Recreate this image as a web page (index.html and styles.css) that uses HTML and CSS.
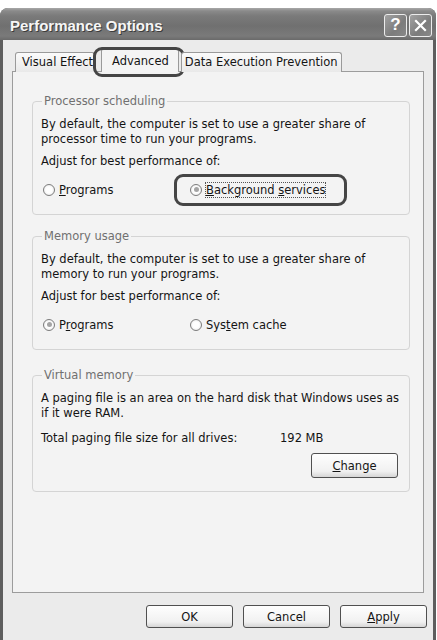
FILE: index.html
```html
<!DOCTYPE html>
<html>
<head>
<meta charset="utf-8">
<link rel="stylesheet" href="styles.css">
</head>
<body>
<div class="window">
  <div class="titlebar">
    <span class="title">Performance Options</span>
    <div class="tbuttons">
      <span class="tbtn">?</span>
      <span class="tbtn close"><svg width="15" height="15" viewBox="0 0 15 15"><path d="M3 3 L12 12 M12 3 L3 12" stroke="#fff" stroke-width="2.2" stroke-linecap="square"/></svg></span>
    </div>
  </div>
  <div class="body">
    <div class="tabs">
      <div class="tab first">Visual Effect</div>
      <div class="tab active">Advanced<span class="hl hl-tab"></span></div>
      <div class="tab last">Data Execution Prevention</div>
    </div>
    <div class="panel">
      <fieldset class="group g1">
        <legend>Processor scheduling</legend>
        <p class="txt">By default, the computer is set to use a greater share of<br>processor time to run your programs.</p>
        <p class="txt adj">Adjust for best performance of:</p>
        <div class="radios">
          <label class="radio r1"><span class="dot"></span><span><u>P</u>rograms</span></label>
          <label class="radio"><span class="dot on"></span><span class="focus"><u>B</u>ackground <u>s</u>ervices</span><span class="hl hl-bg"></span></label>
        </div>
      </fieldset>
      <fieldset class="group g2">
        <legend>Memory usage</legend>
        <p class="txt">By default, the computer is set to use a greater share of<br>memory to run your programs.</p>
        <p class="txt adj">Adjust for best performance of:</p>
        <div class="radios">
          <label class="radio r1"><span class="dot on"></span><span>P<u>r</u>ograms</span></label>
          <label class="radio"><span class="dot"></span><span>Sys<u>t</u>em cache</span></label>
        </div>
      </fieldset>
      <fieldset class="group g3">
        <legend>Virtual memory</legend>
        <p class="txt">A paging file is an area on the hard disk that Windows uses as<br>if it were RAM.</p>
        <div class="total"><span class="tl">Total paging file size for all drives:</span><span>192 MB</span></div>
        <div class="changerow"><button class="btn change"><u>C</u>hange</button></div>
      </fieldset>
    </div>
    <div class="footer">
      <button class="btn">OK</button>
      <button class="btn">Cancel</button>
      <button class="btn"><u>A</u>pply</button>
    </div>
  </div>
</div>
</body>
</html>
```

FILE: styles.css
```css
html, body { margin: 0; padding: 0; background: #fff; }
body { font-family: "DejaVu Sans", "Liberation Sans", sans-serif; font-size: 11.5px; color: #141414; }

.window {
  margin-top: 8px;
  width: 436px;
  height: 632px;
  background: #5e5e5e;
  border-radius: 8px 8px 0 0;
  display: flex;
  flex-direction: column;
  box-sizing: border-box;
  padding: 0 3px;
}
.titlebar {
  height: 32px;
  margin: 0 -3px;
  padding: 0 4px 0 10px;
  display: flex;
  align-items: center;
  justify-content: space-between;
  border-radius: 8px 8px 0 0;
  background: linear-gradient(#a8a8a8 0, #8a8a8a 3px, #7a7a7a 8px, #707070 18px, #7a7a7a 28px, #6a6a6a 32px);
}
.title {
  font-family: "Liberation Sans", "DejaVu Sans", sans-serif;
  font-weight: bold;
  font-size: 15px;
  color: #f6f6f6;
  text-shadow: 1px 1px 0 #3c3c3c;
  margin-top: 2px;
}
.tbuttons { display: flex; gap: 2px; margin-top: 2px; }
.tbtn {
  width: 23px; height: 23px;
  border: 1px solid #ececec;
  border-radius: 3px;
  background: linear-gradient(135deg, #a2a2a2, #7c7c7c 60%, #888);
  color: #fff;
  font-family: "Liberation Sans", sans-serif;
  font-weight: bold;
  font-size: 17px;
  display: flex; align-items: center; justify-content: center;
  box-sizing: border-box;
}

.body {
  flex: 1;
  background: #ebebeb;
  display: flex;
  flex-direction: column;
  padding: 8px 9px 0 9px;
}
.tabs { display: flex; align-items: flex-end; height: 24px; position: relative; z-index: 1; padding-left: 3px; }
.tab {
  position: relative;
  height: 20px;
  line-height: 19px;
  padding: 0 6px;
  border: 1px solid #9a9a9a;
  border-bottom: none;
  border-radius: 3px 3px 0 0;
  background: linear-gradient(#fbfbfb, #e9e9e9);
  box-sizing: border-box;
}
.tab.first { padding: 0 0 0 6px; width: 80px; overflow: hidden; white-space: nowrap; }
.tab.active {
  height: 24px;
  line-height: 22px;
  background: #f4f4f4;
  padding: 0 9px 0 10px;
  margin: 0 2px 0 6px;
  border-top: 2px solid #a0a0a0;
}
.tab.last { padding: 0 3px 0 3px; }
.hl {
  position: absolute;
  border: 3px solid #454545;
  border-radius: 9px;
  pointer-events: none;
}
.hl-tab { left: -9px; top: -3px; right: -7px; bottom: -5px; }

.panel {
  height: 522px;
  background: #f3f3f3;
  border: 1px solid #9c9c9c;
  box-sizing: border-box;
  padding: 22px 12px 0 19px;
  margin-top: -1px;
}
.group {
  border: 1px solid #d4d4d4;
  border-radius: 4px;
  margin: 0;
  padding: 8px 8px 17px 8px;
  box-sizing: border-box;
  width: 378px;
}
.group legend { color: #707070; padding: 0 2px; margin-left: 1px; line-height: 15px; }
.g2 { margin-top: 14px; }
.g3 { margin-top: 18px; padding-bottom: 13px; }
.txt { margin: 0; line-height: 15px; }
.adj { margin-top: 7px; }
.radios { display: flex; margin-top: 13px; padding-left: 2px; height: 15px; align-items: center; }
.radio { display: flex; align-items: center; gap: 4px; position: relative; }
.r1 { width: 147px; }
.dot {
  width: 12px; height: 12px;
  border: 1px solid #7c7c7c;
  border-radius: 50%;
  background: radial-gradient(#fff 40%, #e2e2e2);
  display: inline-flex; align-items: center; justify-content: center;
  box-sizing: border-box;
}
.dot.on::after { content: ""; width: 5px; height: 5px; border-radius: 50%; background: #a4a4a4; }
.focus { outline: 1px dotted #555; outline-offset: 0; }
.hl-bg { left: -16px; top: -9px; right: -22px; bottom: -9px; }
.total { display: flex; margin-top: 10px; line-height: 15px; }
.tl { width: 239px; }
.changerow { display: flex; justify-content: flex-end; margin-top: 7px; padding-right: 3px; }

.btn {
  font-family: inherit;
  font-size: 11.5px;
  color: #141414;
  height: 23px;
  width: 87px;
  border: 1px solid #505050;
  border-radius: 3px;
  background: linear-gradient(#fefefe, #f1f1f1 75%, #d6d6d6);
  padding: 0;
}
.change { height: 25px; }
.footer {
  display: flex;
  justify-content: flex-end;
  gap: 10px;
  padding-top: 12px;
  margin-right: -3px;
}
```
